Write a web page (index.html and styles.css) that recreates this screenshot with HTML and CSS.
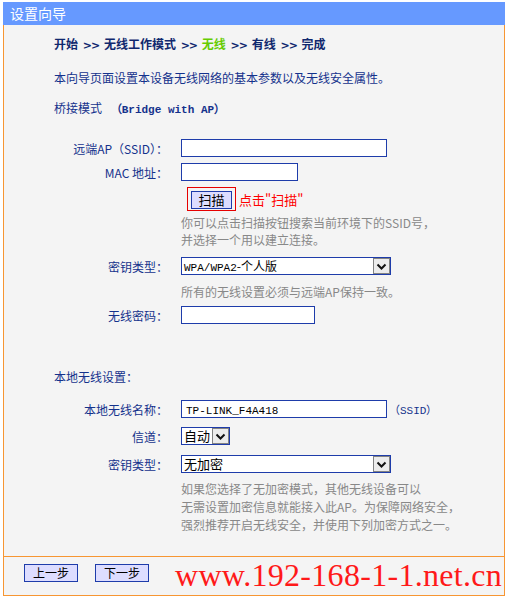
FILE: index.html
```html
<!DOCTYPE html>
<html lang="zh-CN">
<head>
    <meta charset="UTF-8">
    <title>设置向导</title>

    <link rel="stylesheet" href="styles.css">
</head>
<body>

<div id="wizard">
    <div id="title">设置向导</div>

    <div id="content">
        <div class="steps">
            开始 <span class="sep">&gt;&gt;</span> 无线工作模式 <span class="sep">&gt;&gt;</span>
            <span class="current">无线</span> <span class="sep">&gt;&gt;</span> 有线 <span class="sep">&gt;&gt;</span> 完成
        </div>

        <p class="intro">本向导页面设置本设备无线网络的基本参数以及无线安全属性。</p>

        <div class="mode">桥接模式 <span class="latin">（Bridge with AP）</span></div>

        <div class="row r-ssid">
            <label>远端AP（SSID）：</label>
            <div class="input wide"></div>
        </div>
        <div class="row r-mac">
            <label>MAC 地址：</label>
            <div class="input mid"></div>
        </div>
        <div class="row r-scan">
            <span></span>
            <div class="scan-line">
                <span class="scan-box"><button type="button" class="btn scan">扫描</button></span>
                <span class="scan-tip">点击"扫描"</span>
            </div>
        </div>
        <div class="row r-hint1">
            <span></span>
            <div class="hint">你可以点击扫描按钮搜索当前环境下的SSID号，<br>并选择一个用以建立连接。</div>
        </div>
        <div class="row r-key">
            <label>密钥类型：</label>
            <div class="select wide2">
                <span class="value mono">WPA/WPA2<span class="cjk">-个人版</span></span>
                <span class="arrow"><svg width="11" height="7" viewBox="0 0 11 7"><path d="M1.5 1.5 L5.5 5.5 L9.5 1.5" fill="none" stroke="#111" stroke-width="2"/></svg></span>
            </div>
        </div>
        <div class="row r-hint2">
            <span></span>
            <div class="hint">所有的无线设置必须与远端AP保持一致。</div>
        </div>
        <div class="row r-pwd">
            <label>无线密码：</label>
            <div class="input pwd"></div>
        </div>

        <div class="section">本地无线设置：</div>

        <div class="row r-name">
            <label>本地无线名称：</label>
            <div class="name-line">
                <div class="input wide"><span class="mono">TP-LINK_F4A418</span></div>
                <span class="ssid">（SSID）</span>
            </div>
        </div>
        <div class="row r-chan">
            <label>信道：</label>
            <div class="select chan">
                <span class="value">自动</span>
                <span class="arrow"><svg width="11" height="7" viewBox="0 0 11 7"><path d="M1.5 1.5 L5.5 5.5 L9.5 1.5" fill="none" stroke="#111" stroke-width="2"/></svg></span>
            </div>
        </div>
        <div class="row r-key2">
            <label>密钥类型：</label>
            <div class="select wide2">
                <span class="value">无加密</span>
                <span class="arrow"><svg width="11" height="7" viewBox="0 0 11 7"><path d="M1.5 1.5 L5.5 5.5 L9.5 1.5" fill="none" stroke="#111" stroke-width="2"/></svg></span>
            </div>
        </div>
        <div class="row r-hint3">
            <span></span>
            <div class="hint">如果您选择了无加密模式，其他无线设备可以<br>无需设置加密信息就能接入此AP。为保障网络安全，<br>强烈推荐开启无线安全，并使用下列加密方式之一。</div>
        </div>
    </div>

    <div id="footer">
        <button type="button" class="btn nav">上一步</button>
        <button type="button" class="btn nav">下一步</button>
        <div class="watermark">www.192-168-1-1.net.cn</div>
    </div>
</div>

</body>
</html>
```

FILE: styles.css
```css
body {
    margin: 0;
    padding: 2px 3px;
    background-color: rgb(255, 255, 255);
    font-family: "Noto Sans CJK SC", "DejaVu Sans", sans-serif;
    font-size: 12px;
    color: rgb(20, 50, 140);
}

#wizard {
    width: 502px;
}

#title {
    height: 23px;
    line-height: 23px;
    padding-left: 7px;
    background-color: rgb(102, 153, 255);
    color: rgb(255, 255, 255);
    font-size: 14px;
}

#content {
    background-color: rgb(244, 244, 244);
    border-left: 1px solid rgb(247, 150, 50);
    border-right: 1px solid rgb(247, 150, 50);
    padding: 10px 0 0 50px;
    height: 531px;
    box-sizing: border-box;
}

.steps {
    line-height: 18px;
    font-weight: 700;
    color: rgb(16, 40, 110);
}

.steps .sep {
    font-family: "DejaVu Sans", sans-serif;
    font-size: 11px;
    letter-spacing: -1px;
    padding: 0 2px;
}

.steps .current {
    color: rgb(102, 204, 0);
}

.intro {
    margin: 14px 0 0;
    line-height: 18px;
}

.mode {
    margin-top: 12px;
    line-height: 18px;
}

.latin {
    font-family: "Liberation Mono", monospace;
    font-size: 11px;
    font-weight: 700;
    padding-left: 6px;
}

.mono {
    font-family: "Liberation Mono", monospace;
    font-size: 11px;
    color: rgb(0, 0, 0);
}

.mono .cjk {
    font-family: "Noto Sans CJK SC", sans-serif;
    font-size: 12px;
}

.row {
    display: grid;
    grid-template-columns: 127px auto;
    align-items: center;
}

.row label {
    text-align: right;
    padding-right: 13px;
}

.r-ssid { margin-top: 20px; }
.r-mac { margin-top: 6px; }
.r-scan { margin-top: 6px; }
.r-hint1 { margin-top: 3px; }
.r-key { margin-top: 9px; }
.r-hint2 { margin-top: 8px; }
.r-pwd { margin-top: 6px; }
.r-name { margin-top: 14px; }
.r-chan { margin-top: 9px; }
.r-key2 { margin-top: 10px; }
.r-hint3 { margin-top: 7px; }

.section {
    margin-top: 44px;
    line-height: 18px;
}

.input {
    height: 18px;
    border: 1px solid rgb(30, 60, 170);
    background-color: rgb(255, 255, 255);
    box-sizing: border-box;
    padding-left: 4px;
    line-height: 16px;
}

.wide { width: 206px; }
.mid { width: 117px; }
.pwd { width: 134px; }

.scan-line {
    display: flex;
    align-items: center;
    padding-left: 6px;
}

.scan-box {
    display: inline-flex;
    border: 1px solid rgb(230, 0, 0);
    padding: 3px 3px 1px;
}

.btn {
    font-family: "Noto Sans CJK SC", sans-serif;
    font-size: 12px;
    color: rgb(0, 0, 0);
    background-color: rgb(221, 221, 255);
    border: 1px solid rgb(30, 60, 170);
    padding: 0;
    height: 18px;
    line-height: 16px;
}

.scan {
    width: 41px;
    font-size: 13px;
}

.scan-tip {
    color: rgb(255, 0, 0);
    padding-left: 3px;
    font-size: 13px;
}

.hint {
    color: rgb(136, 136, 136);
    line-height: 17px;
}

.r-hint3 .hint {
    line-height: 18px;
}

.select {
    display: flex;
    height: 18px;
    border: 1px solid rgb(30, 60, 170);
    background-color: rgb(255, 255, 255);
    box-sizing: border-box;
}

.select .value {
    flex: 1;
    padding-left: 2px;
    line-height: 16px;
    color: rgb(0, 0, 0);
    font-size: 13px;
}

.select .value.mono {
    font-size: 11px;
}

.select .arrow {
    width: 17px;
    display: flex;
    align-items: center;
    justify-content: center;
    background-color: rgb(236, 236, 236);
    border: 1px solid rgb(130, 130, 130);
    box-sizing: border-box;
}

.wide2 { width: 210px; }
.chan { width: 49px; }

.name-line {
    display: flex;
    align-items: center;
}

.ssid {
    font-family: "Liberation Mono", monospace;
    font-size: 11px;
    padding-left: 2px;
}

#footer {
    position: relative;
    height: 31px;
    border: 1px solid rgb(247, 150, 50);
    background-color: rgb(244, 244, 244);
    padding: 7px 0 0 20px;
    display: flex;
    align-items: flex-start;
    gap: 17px;
}

.nav {
    width: 54px;
}

.watermark {
    position: absolute;
    left: 171px;
    top: 2px;
    font-family: "Liberation Serif", serif;
    font-size: 32px;
    line-height: 32px;
    letter-spacing: 0.3px;
    color: rgb(255, 25, 25);
    white-space: nowrap;
}
```
